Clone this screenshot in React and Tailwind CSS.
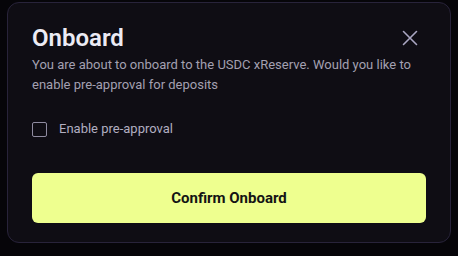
export default function App() {
  return (
    <div
      className="w-[458px] h-[256px] bg-[#060509] pt-[2px] pl-[7px]"
      style={{ fontFamily: "Roboto, 'Liberation Sans', sans-serif" }}
    >
      <div className="w-[444px] h-[241px] rounded-[12px] border border-[#28233a] bg-[#0f0d14] px-[24px] pt-[19px]">
        <div className="flex items-center justify-between">
          <h2 className="text-[24px] leading-[32px] font-semibold text-[#ecebf4]">Onboard</h2>
          <button className="w-[20px] h-[20px] flex items-center justify-center mr-[6px] text-[#aaa6c2]">
            <svg width="16" height="16" viewBox="0 0 16 16" fill="none" stroke="currentColor" strokeWidth="1.6" strokeLinecap="round">
              <path d="M1.5 1.5l13 13M14.5 1.5l-13 13" />
            </svg>
          </button>
        </div>
        <p className="mt-[1px] text-[13px] leading-[20px] text-[#a3a0b1]">
          You are about to onboard to the USDC xReserve. Would you like to enable pre-approval for deposits
        </p>
        <label className="mt-[24px] flex items-center gap-[12px] h-[20px]">
          <span className="w-[15px] h-[15px] rounded-[2px] border-[1.5px] border-[#8f8ba0] block" />
          <span className="text-[13px] text-[#b1aec0]">Enable pre-approval</span>
        </label>
        <button className="mt-[34px] w-full h-[50px] rounded-[6px] bg-[#eeff8f] text-[15px] font-bold text-[#141414]">
          Confirm Onboard
        </button>
      </div>
    </div>
  );
}
